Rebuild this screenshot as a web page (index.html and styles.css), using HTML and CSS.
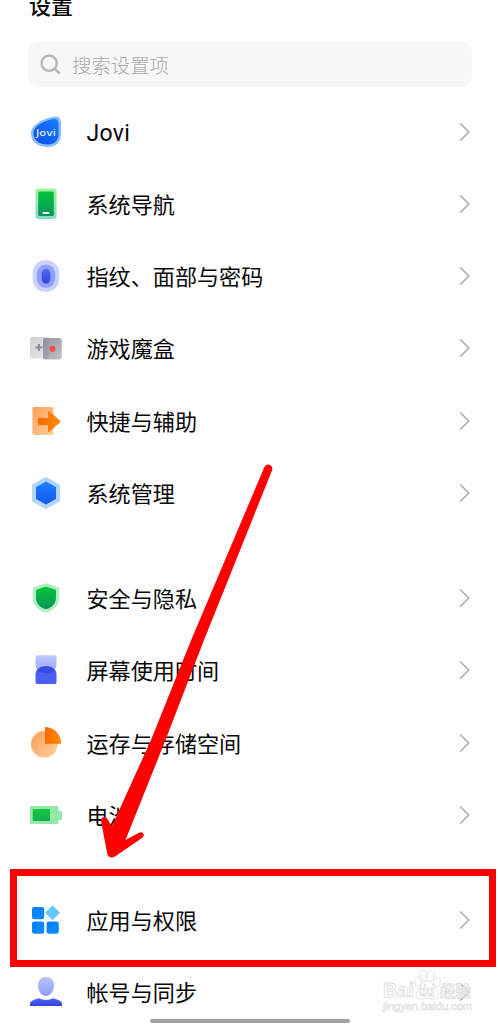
FILE: index.html
```html
<!DOCTYPE html>
<html lang="zh-CN">
<head>
<meta charset="utf-8">
<title>设置</title>
<link rel="stylesheet" href="styles.css">
</head>
<body>
<svg class="defs" width="0" height="0">
  <defs>
    <linearGradient id="blue" x1="0" y1="1" x2="1" y2="0"><stop offset="0" stop-color="#0a4be8"/><stop offset="1" stop-color="#187dff"/></linearGradient>
    <linearGradient id="blueDown" x1="0" y1="0" x2="0" y2="1"><stop offset="0" stop-color="#1b82ff"/><stop offset="1" stop-color="#1457ec"/></linearGradient>
    <linearGradient id="green" x1="0" y1="0" x2="0" y2="1"><stop offset="0" stop-color="#06c53c"/><stop offset="1" stop-color="#079458"/></linearGradient>
    <linearGradient id="mint" x1="0" y1="0" x2="0" y2="1"><stop offset="0" stop-color="#a3f09a"/><stop offset="1" stop-color="#82dcc8"/></linearGradient>
    <linearGradient id="peach" x1="0" y1="0" x2="1" y2="1"><stop offset="0" stop-color="#ff9d57"/><stop offset="1" stop-color="#ffd19e"/></linearGradient>
    <linearGradient id="orange" x1="0" y1="0" x2="1" y2="0"><stop offset="0" stop-color="#f66a00"/><stop offset="1" stop-color="#ff8b0a"/></linearGradient>
    <linearGradient id="lilac" x1="0" y1="0" x2="0" y2="1"><stop offset="0" stop-color="#b9c2ff"/><stop offset="1" stop-color="#919cf5"/></linearGradient>
    <linearGradient id="indigo" x1="0" y1="0" x2="0" y2="1"><stop offset="0" stop-color="#5166fb"/><stop offset="1" stop-color="#3442dc"/></linearGradient>
    <linearGradient id="grayLight" x1="0" y1="0" x2="1" y2="1"><stop offset="0" stop-color="#d0d1d5"/><stop offset="1" stop-color="#e6e6ea"/></linearGradient>
    <linearGradient id="grayDark" x1="0" y1="0" x2="1" y2="1"><stop offset="0" stop-color="#8f919c"/><stop offset="1" stop-color="#c3c4cc"/></linearGradient>
    <linearGradient id="app" x1="0" y1="0" x2="1" y2="1"><stop offset="0" stop-color="#087aff"/><stop offset="1" stop-color="#0c91ff"/></linearGradient>
    <symbol id="chevron" viewBox="0 0 12 20"><path d="M1.200 1.500 9.800 10 1.200 18.500" fill="none" stroke="#a8a8a8" stroke-width="1.400"/></symbol>
  </defs>
</svg>
<main class="screen">
  <h1 class="title">设置</h1>
  <div class="search">
    <svg class="search-icon" viewBox="0 0 22 22"><circle cx="9.200" cy="9.200" r="7.600"/><path d="m14.500 14.500 5.200 5.200"/></svg>
    <span>搜索设置项</span>
  </div>

  <section class="group">
    <div class="row"><svg class="icon" viewBox="0 0 36 36"><path d="M27 2.500C31 2 33 5 33 9v11c0 8-5 13-13 13C10 33 3 28 3 19.500 3 10 18 3.500 27 2.500Z" fill="#86bdf8"/><path d="M26.200 5C29 4.600 30.600 6.700 30.600 10v9.500c0 6.800-4 11-10.800 11C11 30.500 5.400 26 5.400 19.300 5.400 11.500 18 6 26.200 5Z" fill="url(#blue)"/><text class="jovi" x="8" y="22" textLength="20" lengthAdjust="spacingAndGlyphs">Jovi</text></svg><span class="label label-latin">Jovi</span><svg class="chevron"><use href="#chevron"/></svg></div>
    <div class="row"><svg class="icon" viewBox="0 0 36 36"><rect x="7.500" y="2.500" width="21" height="30.500" rx="3" fill="url(#mint)"/><rect x="10.200" y="5.500" width="15.600" height="24.500" rx="1.500" fill="url(#green)"/><rect x="14.500" y="26" width="7" height="2" rx=".8" fill="#e5fff1"/></svg><span class="label">系统导航</span><svg class="chevron"><use href="#chevron"/></svg></div>
    <div class="row"><svg class="icon" viewBox="0 0 36 36"><rect x="4.700" y="2" width="26.500" height="32" rx="13" fill="#cbd2ff"/><rect x="8.800" y="6.500" width="18.400" height="23.500" rx="9.200" fill="#8fa0fa"/><rect x="13.800" y="11" width="8.500" height="14.500" rx="4.200" fill="url(#indigo)"/></svg><span class="label">指纹、面部与密码</span><svg class="chevron"><use href="#chevron"/></svg></div>
    <div class="row"><svg class="icon" viewBox="0 0 36 36"><rect x="2" y="7" width="20" height="21.500" rx="2.500" fill="url(#grayLight)"/><rect x="15" y="8" width="18.800" height="21.500" rx="2.500" fill="url(#grayDark)"/><path d="M15 8.500h5.500v20H15Z" fill="#92949f" opacity=".5"/><path d="M11 14v7M7.500 17.500h7" stroke="#8b8c98" stroke-width="2.200"/><circle cx="24.500" cy="18.800" r="3" fill="#fb4a42"/></svg><span class="label">游戏魔盒</span><svg class="chevron"><use href="#chevron"/></svg></div>
    <div class="row"><svg class="icon" viewBox="0 0 36 36"><rect x="4.500" y="4" width="21" height="28" rx="2" fill="url(#peach)"/><path d="M10.500 15H20V9.200q0-2 1.600-.6l10.300 9q1 .9 0 1.800l-10.300 9Q20 29.800 20 27.800V22h-9.500q-.7 0-.7-.7v-5.600q0-.7.700-.7Z" fill="url(#orange)"/></svg><span class="label">快捷与辅助</span><svg class="chevron"><use href="#chevron"/></svg></div>
    <div class="row"><svg class="icon" viewBox="0 0 36 36"><path d="m18 3.500 12.500 7v15L18 32.500l-12.500-7v-15Z" fill="#b3d5fa" stroke="#b3d5fa" stroke-width="3" stroke-linejoin="round"/><path d="m18 7.500 9 5.200v10.600l-9 5.200-9-5.200V12.700Z" fill="url(#blueDown)" stroke="url(#blueDown)" stroke-width="2" stroke-linejoin="round"/></svg><span class="label">系统管理</span><svg class="chevron"><use href="#chevron"/></svg></div>
  </section>

  <section class="group">
    <div class="row"><svg class="icon" viewBox="0 0 36 36"><path d="M17 3.600q1-.4 2 0l11 3.600q1.200.4 1.200 1.700V18c0 7-5.200 12-12.200 14.400q-1 .3-2 0C10 30 4.800 25 4.800 18V8.900q0-1.300 1.200-1.700Z" fill="#b0edc1"/><path d="M17.200 6.800q.8-.3 1.600 0l8.200 2.700q1 .3 1 1.400v7c0 5-3.500 9-9.200 11q-.8.300-1.600 0C11.500 26.900 8 22.900 8 17.900v-7q0-1.100 1-1.400Z" fill="url(#green)"/></svg><span class="label">安全与隐私</span><svg class="chevron"><use href="#chevron"/></svg></div>
    <div class="row"><svg class="icon" viewBox="0 0 36 36"><path d="M9.500 3.300h17q2 0 2 2V12q0 4-3 7h-15q-3-3-3-7V5.300q0-2 2-2Z" fill="url(#lilac)" opacity=".9"/><path d="M7.500 30v-7.500c0-5 4-8.200 10.500-8.200s10.500 3.200 10.500 8.200V30q0 2-2 2h-17q-2 0-2-2Z" fill="#4a5ef4"/><path d="M9.300 18.500c2-3 5-4.200 8.700-4.200s6.700 1.200 8.700 4.200c-4 3.500-13.400 3.500-17.400 0Z" fill="#3a4ce4"/></svg><span class="label">屏幕使用时间</span><svg class="chevron"><use href="#chevron"/></svg></div>
    <div class="row"><svg class="icon" viewBox="0 0 36 36"><circle cx="16.300" cy="19.300" r="13.300" fill="url(#peach)"/><path d="M17 2.600q0-.6.700-.5C26 2.500 32.500 9 33.200 18q0 .8-.8.800H17Z" fill="url(#orange)"/></svg><span class="label">运存与存储空间</span><svg class="chevron"><use href="#chevron"/></svg></div>
    <div class="row"><svg class="icon" viewBox="0 0 36 36"><path d="M3.500 9H29q1.500 0 1.500 1.500V14H33q1 0 1 1v7q0 1-1 1h-2.500v2.500Q30.500 27 29 27H3.500Q2 27 2 25.500v-15Q2 9 3.500 9Z" fill="#95e8a6"/><rect x="4.800" y="12" width="17.200" height="12" rx="1" fill="url(#green)"/><rect x="4.800" y="12" width="17.200" height="12" rx="1" fill="#1fd247" opacity=".45"/></svg><span class="label">电池</span><svg class="chevron"><use href="#chevron"/></svg></div>
  </section>

  <section class="group">
    <div class="row"><svg class="icon" viewBox="0 0 36 36"><g fill="url(#app)"><rect x="4" y="5" width="12.200" height="12.200" rx="2.300"/><rect x="4" y="19.500" width="12.200" height="12.200" rx="2.300"/><rect x="18.600" y="19.500" width="12.200" height="12.200" rx="2.300"/></g><rect x="19.200" y="5.500" width="10.600" height="10.600" rx="1" transform="rotate(45 24.500 10.800)" fill="#65c9ff"/></svg><span class="label">应用与权限</span><svg class="chevron"><use href="#chevron"/></svg></div>
    <div class="row"><svg class="icon" viewBox="0 0 36 36"><path d="M18 3c4.700 0 8 3.300 8 8.300C26 17 22.500 22 18 22s-8-5-8-10.700C10 6.300 13.300 3 18 3Z" fill="url(#lilac)"/><path d="M2 32v-2c0-3 4-4.300 9-5.700 4.500 2.200 9.500 2.200 14 0 5 1.400 9 2.700 9 5.700v2Z" fill="url(#indigo)"/></svg><span class="label">帐号与同步</span><svg class="chevron"><use href="#chevron"/></svg></div>
  </section>

  <div class="home-bar"></div>
  <svg class="watermark" viewBox="0 0 100 50">
    <g class="mark-shapes"><ellipse cx="37" cy="12.500" rx="3.300" ry="4.500"/><ellipse cx="42" cy="6.500" rx="3.500" ry="5"/><ellipse cx="50" cy="6.500" rx="3.500" ry="5"/><ellipse cx="56" cy="13.500" rx="3.300" ry="4.500"/><path d="M46 12c5 0 6 5 9 9 4 5 1 10-4 9-3-1-7-1-10 0-5 1-8-4-4-9 3-4 4-9 9-9Z"/></g>
    <g class="mark-text"><text x="2" y="28" class="brand" textLength="31" lengthAdjust="spacingAndGlyphs">Bai</text><text x="38" y="27" class="du" textLength="15" lengthAdjust="spacingAndGlyphs">du</text><text x="59" y="27.500" class="cn" textLength="31">经验</text><text x="2" y="41" class="url" textLength="89" lengthAdjust="spacingAndGlyphs">jingyan.baidu.com</text></g>
  </svg>
  <div class="highlight"></div>
  <svg class="pointer" viewBox="0 0 180 400"><path d="M164.200 7.500q1.600-3.700 5.300-2.700 4 1.500 2.500 5.700L104 180 65.500 280 25.500 380l14-7.500q3-1 4 1.500.9 2.300-1.200 3.700L15 396.500q-5.500 2.500-7.500-1.500L1 361q0-4 3.500-4 2 0 3.300 2.500l4 7L51 280l40.200-100Z" fill="#fe0000"/></svg>
</main>
</body>
</html>
```

FILE: styles.css
```css
* { box-sizing: border-box; }

body {
  margin: 0;
  background: #fff;
  color: #080808;
  font-family: "Noto Sans CJK SC", "Noto Sans", sans-serif;
}

.defs { position: absolute; }

.screen {
  position: relative;
  width: 500px;
  height: 1024px;
  overflow: hidden;
  background: #fefefe;
}

.title {
  margin: -12px 0 22px 29px;
  height: 32px;
  font-size: 22px;
  line-height: 32px;
  font-weight: 500;
}

.search {
  display: flex;
  align-items: center;
  gap: 10px;
  width: 444px;
  height: 45px;
  margin-left: 28px;
  padding-left: 12px;
  border-radius: 11px;
  background: #f7f7f7;
  color: #aaa;
  font-size: 19.400px;
  font-weight: 300;
  line-height: 44px;
}

.search-icon {
  width: 22px;
  height: 22px;
  fill: none;
  stroke: #b8b8b8;
  stroke-width: 2.500;
}

.group { margin-top: 33.200px; }
.search + .group { margin-top: 8.800px; }

.row {
  display: flex;
  align-items: center;
  height: 72.200px;
  padding: 0 29px 0 28px;
}

.icon { width: 36px; height: 36px; flex: none; }

.label {
  flex: 1;
  margin-left: 22.500px;
  padding-bottom: 2px;
  font-size: 22.100px;
  line-height: 32px;
  white-space: nowrap;
}

.label-latin {
  padding: 4px 0 0;
  font-family: Roboto, sans-serif;
  font-size: 23px;
  letter-spacing: .3px;
}

.chevron { width: 12px; height: 20px; }

.jovi {
  fill: #fff;
  font: 8px "DejaVu Sans", sans-serif;
}

.home-bar {
  position: absolute;
  left: 150px;
  top: 1019px;
  width: 200px;
  height: 4px;
  border-radius: 2px;
  background: #a0a09f;
}

.watermark {
  position: absolute;
  left: 381px;
  top: 969px;
  width: 100px;
  height: 50px;
}

.mark-shapes, .mark-text {
  fill: #fff;
  fill-opacity: .5;
  stroke: #dedede;
  stroke-width: .9;
}

.brand { font: 700 21px "Liberation Sans", sans-serif; }
.du { font: 700 14px "Liberation Sans", sans-serif; }
.cn { font: 700 15.500px "Noto Sans CJK SC", sans-serif; }
.mark-text .url { font: 10px "Liberation Sans", sans-serif; stroke-width: .600; }

.highlight {
  position: absolute;
  left: 10px;
  top: 869px;
  width: 486px;
  height: 98px;
  border: 7px solid #fe0000;
}

.pointer {
  position: absolute;
  left: 100px;
  top: 460px;
  width: 180px;
  height: 400px;
}
```
